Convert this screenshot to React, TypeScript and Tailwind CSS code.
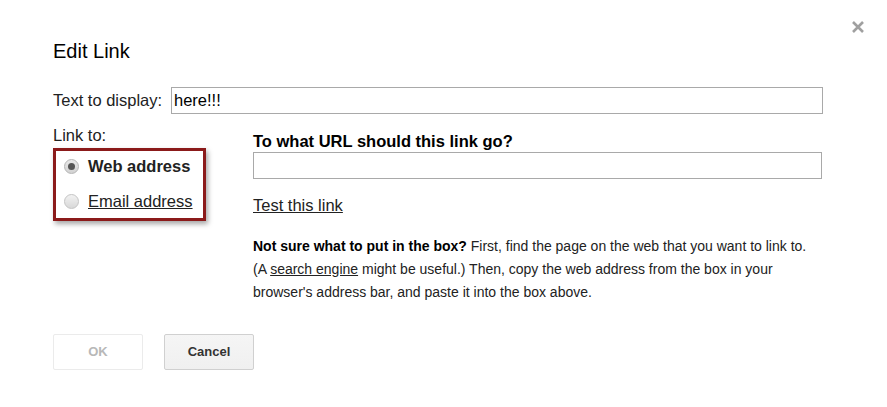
export default function App() {
  return (
    <div
      className="relative h-[407px] w-[887px] bg-white text-[#222]"
      style={{ fontFamily: '"Liberation Sans", Arial, sans-serif' }}
    >
      <button className="absolute right-[22px] top-[20px] text-[#aaa]" aria-label="Close">
        <svg width="14" height="14" viewBox="0 0 14 14">
          <path d="M2 2 L12 12 M12 2 L2 12" stroke="#a0a0a0" strokeWidth="2.6" />
        </svg>
      </button>

      <div className="px-[53px] pt-[38px]">
        <h1 className="text-[20px] leading-[26px] text-black">Edit Link</h1>

        <div className="mt-[23px] flex items-center">
          <span className="w-[118px] text-[16.5px] text-[#222]">Text to display:</span>
          <input
            defaultValue="here!!!"
            className="h-[27px] w-[652px] border border-[#a9a9a9] px-[2px] text-[16.5px] text-black outline-none"
          />
        </div>

        <div className="mt-[12px] flex">
          <div className="w-[200px]">
            <div className="text-[16.5px] leading-[18px] text-[#222]">Link to:</div>
            <div className="mt-[4px] w-[153px] border-[3px] border-[#8b1a1a] pb-[5px] pl-[8px] pt-[3px] shadow-[2px_3px_5px_rgba(0,0,0,0.35)]">
              <label className="flex h-[24px] items-center gap-[9px]">
                <span className="flex h-[15px] w-[15px] items-center justify-center rounded-full border border-[#b5b5b5] bg-gradient-to-b from-[#e8e8e8] to-[#d2d2d2]">
                  <span className="h-[7px] w-[7px] rounded-full bg-[#555]" />
                </span>
                <span className="text-[16.5px] font-bold text-[#222]">Web address</span>
              </label>
              <label className="mt-[11px] flex h-[24px] items-center gap-[9px]">
                <span className="h-[15px] w-[15px] rounded-full border border-[#c4c4c4] bg-gradient-to-b from-[#f2f2f2] to-[#d8d8d8]" />
                <span className="text-[16.5px] text-[#222] underline">Email address</span>
              </label>
            </div>
          </div>

          <div className="flex-1">
            <div className="mt-[6px] text-[16.5px] font-bold leading-[18px] text-black">
              To what URL should this link go?
            </div>
            <input className="mt-[2px] h-[27px] w-[569px] border border-[#a9a9a9] outline-none" />
            <div className="mt-[14px] text-[16.5px] text-[#222] underline">Test this link</div>
            <div className="mt-[17px] text-[14px] leading-[23px] text-[#222]">
              <div>
                <b className="text-black">Not sure what to put in the box?</b>{" "}
                <span>First, find the page on the web that you want to link to.</span>
              </div>
              <div>
                <span>(A </span>
                <span className="underline">search engine</span>
                <span> might be useful.) Then, copy the web address from the box in your</span>
              </div>
              <div>browser's address bar, and paste it into the box above.</div>
            </div>
          </div>
        </div>

        <div className="mt-[30px] flex gap-[21px]">
          <button className="h-[36px] w-[90px] rounded-[2px] border border-[#ebebeb] bg-white text-[13px] font-bold text-[#b8b8b8]">
            OK
          </button>
          <button className="h-[36px] w-[90px] rounded-[2px] border border-[#d0d0d0] bg-gradient-to-b from-[#f5f5f5] to-[#f0f0f0] text-[13px] font-bold text-[#333]">
            Cancel
          </button>
        </div>
      </div>
    </div>
  );
}
